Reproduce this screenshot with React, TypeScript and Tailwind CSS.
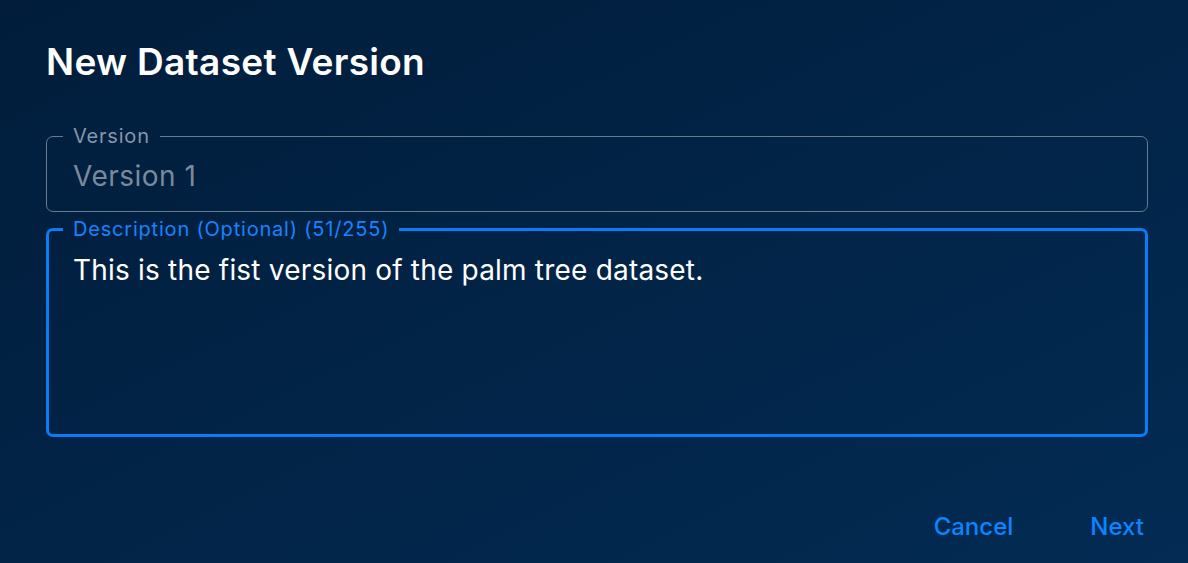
import React from "react";

const App = () => {
  return (
    <div
      className="w-[1188px] h-[563px] overflow-hidden bg-gradient-to-br from-[#011d3b] to-[#032b53] pl-[46px] pr-[40px] pt-[40px]"
      style={{ fontFamily: "Inter, 'Noto Sans', sans-serif" }}
    >
      <h1 className="text-[37px] leading-[44px] font-semibold tracking-[0.3px] text-white">
        New Dataset Version
      </h1>

      <fieldset className="mt-[42px] h-[86px] rounded-[7px] border border-[#687b8f] pl-[16px] pr-4">
        <legend className="px-[10px] text-[20px] leading-[20px] tracking-[0.8px] text-[#8796a8]">
          Version
        </legend>
        <div className="pl-[10px] pt-[11px] text-[28px] leading-[38px] tracking-[0.5px] text-[#7a8a9c]">
          Version 1
        </div>
      </fieldset>

      <fieldset className="mt-[7px] h-[218px] rounded-[7px] border-[3px] border-[#0a7cf5] pl-[14px] pr-4">
        <legend className="px-[10px] text-[20px] leading-[20px] tracking-[0.8px] text-[#1883ff]">
          Description (Optional) (51/255)
        </legend>
        <div className="pl-[10px] pt-[12px] text-[28px] leading-[38px] tracking-[0.2px] text-white">
          This is the fist version of the palm tree dataset.
        </div>
      </fieldset>

      <div className="mt-[72px] flex justify-end gap-[77px] pr-[4px]">
        <button className="text-[24px] font-medium text-[#0a84ff]">Cancel</button>
        <button className="text-[24px] font-medium text-[#0a84ff]">Next</button>
      </div>
    </div>
  );
};

export default App;
